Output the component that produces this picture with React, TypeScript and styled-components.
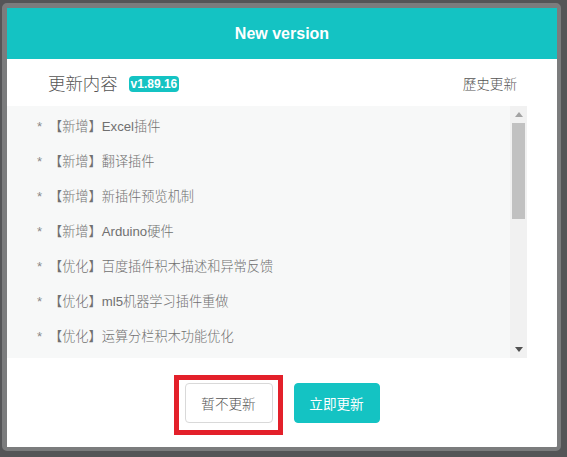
import React from "react";
import styled, { createGlobalStyle } from "styled-components";

const Global = createGlobalStyle`
  html, body { margin: 0; padding: 0; background: #545557; }
  body { width: 567px; height: 457px; overflow: hidden; font-family: "Liberation Sans", "Noto Sans CJK SC", sans-serif; }
`;

const Page = styled.div`
  padding: 3px 0 0 2px;
`;

const Modal = styled.div`
  width: 550px;
  height: 439px;
  border-style: solid;
  border-color: #7b7c7d;
  border-width: 5px 4px 4px 5px;
  border-radius: 5px;
  background: #fff;
  display: flex;
  flex-direction: column;
  overflow: hidden;
`;

const Header = styled.div`
  height: 51px;
  flex: none;
  background: #14c3c3;
  display: flex;
  align-items: center;
  justify-content: center;
  color: #fff;
  font-family: "Liberation Sans", sans-serif;
  font-weight: bold;
  font-size: 16px;
`;

const SubHeader = styled.div`
  height: 47px;
  flex: none;
  display: flex;
  align-items: center;
  padding: 0 40px 0 41px;
`;

const Title = styled.span`
  font-family: "Noto Sans CJK SC", sans-serif;
  font-weight: 300;
  font-size: 17.4px;
  color: #555;
`;

const Badge = styled.span`
  margin-left: 11px;
  height: 16px;
  line-height: 16px;
  padding: 0 2px;
  border-radius: 4px;
  background: #14c3c3;
  color: #fff;
  font-family: "Liberation Sans", sans-serif;
  font-weight: bold;
  font-size: 12px;
  margin-top: 2px;
`;

const History = styled.span`
  margin-left: auto;
  font-family: "Noto Sans CJK TC", "Noto Sans CJK SC", sans-serif;
  font-weight: 300;
  font-size: 13.6px;
  color: #555;
`;

const ListBox = styled.div`
  height: 252px;
  flex: none;
  margin-right: 30px;
  background: #f7f8f8;
  display: flex;
`;

const List = styled.ul`
  flex: 1;
  margin: 0;
  padding: 3px 0 0 30px;
  list-style: none;
  overflow: hidden;
`;

const Item = styled.li`
  height: 35px;
  line-height: 35px;
  font-family: "Liberation Sans", "Noto Sans CJK SC", sans-serif;
  font-weight: 300;
  font-size: 13.2px;
  color: #707070;
  white-space: nowrap;
`;

const Star = styled.span`
  display: inline-block;
  width: 12px;
  color: #888;
`;

const Scrollbar = styled.div`
  width: 17px;
  flex: none;
  background: #f1f1f1;
  display: flex;
  flex-direction: column;
`;

const ArrowBox = styled.div`
  height: 17px;
  flex: none;
  display: flex;
  align-items: center;
  justify-content: center;
`;

const Thumb = styled.div`
  margin: 0 2px;
  height: 96px;
  background: #c1c1c1;
`;

const Spacer = styled.div`
  flex: 1;
`;

const Footer = styled.div`
  flex: 1;
  display: flex;
  align-items: center;
  justify-content: center;
  gap: 21px;
  padding-top: 1px;
`;

const Button = styled.button<{ $primary?: boolean }>`
  height: 40px;
  width: ${(p) => (p.$primary ? 86 : 88)}px;
  border-radius: 4px;
  border: 1px solid ${(p) => (p.$primary ? "#14c3c3" : "#d9d9d9")};
  background: ${(p) => (p.$primary ? "#14c3c3" : "#fff")};
  color: ${(p) => (p.$primary ? "#fff" : "#555")};
  font-family: "Noto Sans CJK SC", sans-serif;
  font-weight: ${(p) => (p.$primary ? 400 : 300)};
  font-size: 13.6px;
  padding: 0;
  cursor: pointer;
`;

const Marked = styled.div`
  position: relative;
  display: flex;
`;

const RedFrame = styled.div`
  position: absolute;
  top: -8px;
  bottom: -12px;
  left: -11px;
  right: -10px;
  border: 5px solid #e3202a;
  pointer-events: none;
`;

const items = [
  "【新增】Excel插件",
  "【新增】翻译插件",
  "【新增】新插件预览机制",
  "【新增】Arduino硬件",
  "【优化】百度插件积木描述和异常反馈",
  "【优化】ml5机器学习插件重做",
  "【优化】运算分栏积木功能优化",
];

const Up = () => (
  <svg width="8" height="5" viewBox="0 0 8 5">
    <polygon points="4,0 8,5 0,5" fill="#a3a3a3" />
  </svg>
);
const Down = () => (
  <svg width="8" height="5" viewBox="0 0 8 5">
    <polygon points="0,0 8,0 4,5" fill="#505050" />
  </svg>
);

export default function App() {
  return (
    <>
      <Global />
      <Page>
        <Modal>
          <Header>New version</Header>
          <SubHeader>
            <Title>更新内容</Title>
            <Badge>v1.89.16</Badge>
            <History>歷史更新</History>
          </SubHeader>
          <ListBox>
            <List>
              {items.map((t) => (
                <Item key={t}>
                  <Star>*</Star>
                  {t}
                </Item>
              ))}
            </List>
            <Scrollbar>
              <ArrowBox>
                <Up />
              </ArrowBox>
              <Thumb />
              <Spacer />
              <ArrowBox>
                <Down />
              </ArrowBox>
            </Scrollbar>
          </ListBox>
          <Footer>
            <Marked>
              <Button>暂不更新</Button>
              <RedFrame />
            </Marked>
            <Button $primary>立即更新</Button>
          </Footer>
        </Modal>
      </Page>
    </>
  );
}
